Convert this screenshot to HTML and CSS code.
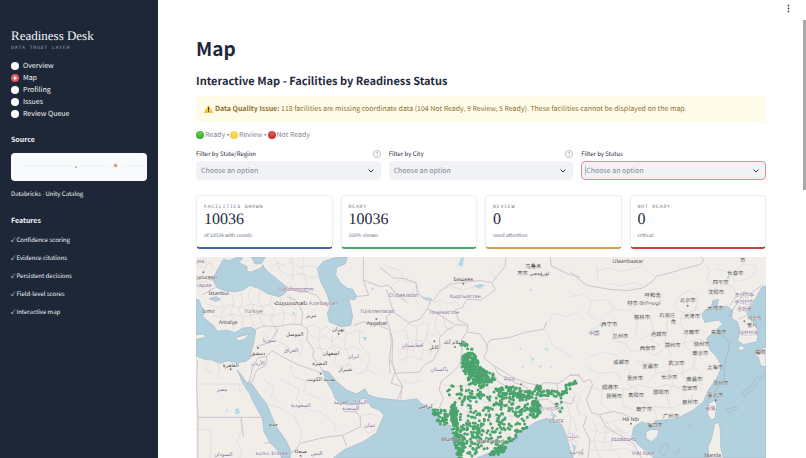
FILE: index.html
```html
<!DOCTYPE html>
<html lang="en">
<head>
<meta charset="utf-8">
<title>Readiness Desk - Map</title>
<link rel="stylesheet" href="styles.css">
</head>
<body>
<div class="app">
<aside class="sidebar">
  <div class="brand">Readiness Desk</div>
  <div class="eyebrow tagline">DATA TRUST LAYER</div>
  <nav class="nav">
    <label><input type="radio" name="page">Overview</label>
    <label><input type="radio" name="page" checked>Map</label>
    <label><input type="radio" name="page">Profiling</label>
    <label><input type="radio" name="page">Issues</label>
    <label><input type="radio" name="page">Review Queue</label>
  </nav>
  <h3>Source</h3>
  <div class="source"><svg viewBox="0 0 136 28" aria-hidden="true"><path d="M9 13H62M69 13H98M111 13H136" stroke="#f1f3f5" stroke-width="2" stroke-dasharray="2 1"/><circle cx="65" cy="14" r=".7" fill="#555"/><circle cx="104.500" cy="12.500" r="2.500" fill="#f8e3d3"/><circle cx="104.500" cy="12.500" r="1.200" fill="#c67a4b"/></svg></div>
  <p class="caption">Databricks <span class="sep">·</span> Unity Catalog</p>
  <h3>Features</h3>
  <ul class="features">
    <li>✓ Confidence scoring</li>
    <li>✓ Evidence citations</li>
    <li>✓ Persistent decisions</li>
    <li>✓ Field-level scores</li>
    <li>✓ Interactive map</li>
  </ul>
</aside>
<main class="main">
  <button class="menu" aria-label="Menu"><svg viewBox="0 0 9 9"><circle cx="4.500" cy="1.500" r=".9"/><circle cx="4.500" cy="4.500" r=".9"/><circle cx="4.500" cy="7.500" r=".9"/></svg></button>
  <div class="scroll-thumb"></div>
  <h1>Map</h1>
  <h2>Interactive Map - Facilities by Readiness Status</h2>
  <div class="alert">
    <svg viewBox="0 0 18 16" aria-hidden="true"><path d="M9 1.500 17 15H1Z" fill="#fcc52c" stroke="#f3b41f" stroke-width="1.500" stroke-linejoin="round"/><path d="M9 5v5" stroke="#333" stroke-width="2" stroke-linecap="round"/><circle cx="9" cy="13" r="1.200" fill="#333"/></svg>
    <p><b>Data Quality Issue:</b> 118 facilities are missing coordinate data (104 Not Ready, 9 Review, 5 Ready). These facilities cannot be displayed on the map.</p>
  </div>
  <div class="legend"><i class="dot green"></i><span>Ready <span class="sep">•</span></span><i class="dot yellow"></i><span>Review <span class="sep">•</span></span><i class="dot red"></i><span>Not Ready</span></div>
  <div class="filters">
    <div class="field">
      <div class="field-head"><label for="state">Filter by State/Region</label><svg class="help" viewBox="0 0 16 16"><circle cx="8" cy="8" r="7"/><path d="M5.800 6.500c0-3 4.600-2.700 4.400 0 0 1.500-2.200 1.400-2.200 3.300M8 11v1.500"/></svg></div>
      <div class="pick"><select id="state"><option>Choose an option</option></select><svg viewBox="0 0 8 8"><path d="M1.500 2.500 4 5l2.500-2.500"/></svg></div>
    </div>
    <div class="field">
      <div class="field-head"><label for="city">Filter by City</label><svg class="help" viewBox="0 0 16 16"><circle cx="8" cy="8" r="7"/><path d="M5.800 6.500c0-3 4.600-2.700 4.400 0 0 1.500-2.200 1.400-2.200 3.300M8 11v1.500"/></svg></div>
      <div class="pick"><select id="city"><option>Choose an option</option></select><svg viewBox="0 0 8 8"><path d="M1.500 2.500 4 5l2.500-2.500"/></svg></div>
    </div>
    <div class="field">
      <div class="field-head"><label for="status">Filter by Status</label></div>
      <div class="pick active"><select id="status"><option>Choose an option</option></select><svg viewBox="0 0 8 8"><path d="M1.500 2.500 4 5l2.500-2.500"/></svg></div>
    </div>
  </div>
  <div class="cards">
    <div class="card blue"><div class="eyebrow">FACILITIES SHOWN</div><div class="value">10036</div><div class="note">of 10036 with coords</div></div>
    <div class="card ok"><div class="eyebrow">READY</div><div class="value">10036</div><div class="note">100% shown</div></div>
    <div class="card warn"><div class="eyebrow">REVIEW</div><div class="value">0</div><div class="note">need attention</div></div>
    <div class="card bad"><div class="eyebrow">NOT READY</div><div class="value">0</div><div class="note">critical</div></div>
  </div>
  <svg class="map" viewBox="18 21 1710 603" role="img" aria-label="Facility map">
    <rect x="18" y="21" width="1710" height="603" fill="#f1eeea"/>
    <!-- seas -->
    <g class="sea">
      <path d="M100 28 118 32 140 22 158 24 147 38 172 50 170 64 184 66 208 56 222 48 216 44 232 64 262 88 290 112 283 132 268 140 235 132 212 118 180 106 160 120 135 125 105 122 80 112 70 90 78 68Z"/>
      <path d="M184 21H226L214 40 196 42Z"/>
      <path d="M382 55 400 35 440 21H472L465 42 440 52 437 75 452 100 472 115 488 118 500 140 492 150 476 146 482 170 488 200 482 226 452 230 418 216 412 190 422 165 410 130 392 95Z"/>
      <path d="M58 146 78 140 92 148 76 154Z"/>
      <path d="M18 148 28 150 34 170 44 182 38 200 56 215 72 228 82 244 110 240 135 248 158 234 185 232 197 240 192 275 184 305 180 325 168 334 140 338 112 332 90 340 66 330 45 328 18 318V268L48 262 40 252 18 254Z"/>
      <path d="M142 360 156 378 172 402 174 395 184 400 205 430 230 462 248 506 262 535 290 575 303 605 300 624H275L262 600 240 578 222 545 217 505 195 465 178 430 160 402Z"/>
      <path d="M398 362 415 365 440 395 470 420 500 432 525 416 534 434 565 444 600 448 640 452 680 446 696 462 728 474 740 500 758 525 782 526 792 560 804 624H430L465 598 520 575 558 550 582 495 568 480 545 472 528 446 512 446 508 462 480 465 450 460 435 445 426 420 410 395Z"/>
      <path d="M860 624 920 600 970 565 1012 532 1040 515 1070 505 1100 512 1116 525 1130 560 1140 600 1150 624Z"/>
      <path d="M1535 195 1545 180 1565 170 1568 152 1585 148 1580 175 1610 168 1628 182 1625 205 1642 215 1650 240 1643 272 1660 284 1700 275 1706 245 1695 225 1673 198 1670 180 1695 150 1704 132 1716 112 1728 108V624H1392L1370 605 1340 580 1325 560 1332 530 1355 515 1378 524 1388 530 1396 512 1460 506 1510 480 1540 455 1555 420 1580 385 1596 350 1578 318 1560 300 1550 265 1572 245 1598 222 1588 210 1560 214 1545 218Z"/>
    </g>
    <g class="isle">
      <path d="M134 264 154 258 178 252 166 266 148 273Z"/>
      <path d="M368 545 385 538 407 540 402 560 384 575 368 565Z" transform="translate(1000)"/>
      <path d="M1573 450 1580 464 1575 505 1563 510 1552 490 1556 462Z"/>
      <path d="M1574 520 1586 518 1592 540 1592 590 1600 624H1556L1554 590 1565 565Z"/>
      <path d="M1700 300 1728 290V350L1712 348 1706 322 1694 316ZM1642 294 1656 286 1664 296 1652 302Z"/>
      <path d="M1728 360 1700 384 1680 412 1656 426 1662 438 1690 416 1712 385 1728 374ZM1608 478 1640 470 1640 478 1614 489ZM1408 608 1416 584 1432 582 1437 594 1422 616ZM1448 610 1468 596 1470 604 1454 615Z" fill="none"/>
      <circle cx="1500" cy="527" r="6" fill="none"/>
    </g>
    <g class="lake"><path d="M20 186 32 195 24 202ZM28 210 45 218 36 225ZM20 232 44 238 30 245ZM306 184 316 188 310 196ZM518 260 532 262 524 274ZM540 120 550 112 552 118ZM134 478 145 474 150 488 138 494ZM108 478 114 480 110 488ZM804 45 812 25 822 21 818 50ZM850 108 870 102 888 106 866 116ZM690 140 724 144 726 150 700 148ZM1016 120 1024 118 1028 124ZM1226 224 1240 222 1238 234ZM1020 322 1034 326 1028 334ZM1060 296 1070 294 1078 304ZM1046 348 1056 346 1052 354ZM992 350 1004 348 998 354ZM986 296 996 292 992 300ZM1076 350 1088 346 1082 353ZM1080 492 1098 494 1092 508ZM1144 578 1160 590 1152 606ZM1610 80 1620 76 1614 90Z"/></g>
    <!-- provinces -->
    <g class="prov"><path d="M18 45 42 52 60 38 74 60M44 21 50 44 34 80 64 92M18 98 50 94 62 120M240 52 262 40 282 46 302 34 330 52 364 48 390 62M256 21 268 60 298 78 330 70 360 82 388 80M302 21 310 58 306 92M340 21 338 60 352 108M92 150 104 176 92 200 108 232M124 128 132 158 122 190 136 214 130 242M150 126 158 154 146 182 160 206 156 234M182 112 174 142 190 170 180 198 194 230M212 120 204 150 222 176 210 204 222 234M246 136 238 160 254 184 242 212 256 232M276 142 268 166 284 190 276 226M300 132 304 164 320 184 312 222M52 162 84 174 120 164 150 174 182 162 218 170 250 158 290 168 330 158M66 196 96 202 128 192 160 200 204 190 244 198 280 188 320 198M350 232 372 224 392 240 408 230 430 246 452 240 478 252 500 240 530 250M360 254 384 270 402 256 424 276 446 260 468 280M376 292 410 300 432 286 460 300 492 290 514 305M390 240 384 280 398 310 388 340M428 246 424 280 440 312 430 346M468 250 464 292 480 326 470 352M510 240 508 280 540 320 530 360M446 350 480 342 500 372 538 360 566 380M214 244 234 262 220 288M264 236 254 270 292 288 280 316M292 250 324 260 340 292 328 320M50 336 48 358 70 374M82 340 90 362 78 384M100 338 108 364M146 400 152 430M18 402H172M150 502 156 540 140 575 156 600 150 624M18 538H62V624M218 388 252 410 244 440 276 462M268 386 296 400 330 420 318 446 350 478 394 488M230 460 274 476 312 498 336 548 328 580M352 430 400 452M394 488 430 516 440 548M300 346 312 380 352 396 340 424M510 500 540 490 566 500M512 530 534 550 556 540"/>
      <path transform="translate(570)" d="M20 50 62 62 70 92 110 100 120 140 150 158M60 90 32 110 48 140 86 150M110 96 98 128 118 170M160 158 184 150 200 162 228 154 240 168M178 122 212 108 250 120 282 110 310 118M40 250 72 240 82 222 110 230 130 218 152 226M50 300 88 296 100 268 132 276 142 250 170 258M60 330 94 318 124 330 130 300 160 306M78 240 86 280 76 338M108 232 112 270 98 308M146 230 140 264 158 290 148 320M170 200 164 238 184 258M190 196 196 232 220 240M66 390 92 402 120 390M170 450 158 470M180 400 222 412 262 404 294 418 342 412M204 440 240 452 284 440 322 458 370 446 430 462M236 474 268 490 310 482 352 504 396 498 442 512M230 524 274 530 310 548 350 538 388 556M236 570 284 576 320 566 358 592M262 404 252 444 264 480 254 520 262 590M322 400 330 444 322 490 334 536 322 600M392 420 384 466 396 510M440 440 448 470 438 520M508 216 518 190 560 200 600 184M330 60 350 92M500 216 494 236 522 290 576 320M560 460 574 510 566 540 590 580M570 440 588 460 600 500"/>
      <path transform="translate(1140)" d="M80 50 84 92M86 60 120 54 150 64 208 52 226 21M120 100 152 108 190 98 220 106M0 140 40 132 66 152 110 148 134 178 180 184 200 160M190 184 202 222 196 250 216 268 240 250M134 178 100 200 86 230 60 238M66 152 54 190 80 212M110 222 132 240 128 270 166 280 186 262M166 280 180 304 224 300 250 316 280 300M240 196 250 236 244 270 270 286M290 190 292 240 284 282 308 316M338 190 330 222 350 250 340 280 362 304M316 150 340 130 362 120 384 140 376 180 350 190 318 180ZM376 170 396 192M350 250 388 238 412 248M340 280 386 268 410 276M60 320 100 306 140 316 166 300M48 350 84 370 130 366 156 384M156 330 180 360 170 400 200 420M200 334 250 340 258 370 230 398M258 370 300 362 330 372M302 330 296 360 310 402 290 440 302 474M340 330 336 370 354 402 340 440M376 310 372 350 400 380 392 420M330 372 372 350M48 410 96 420 132 410 170 420 202 404 246 414 290 404 354 420 390 400M98 420 92 460 130 490M160 420 158 466 190 480M200 420 212 456 250 470 262 508M250 470 302 474 342 460M370 430 360 462M400 40 420 58 410 90 440 104 430 130M440 58 480 66 494 96 540 84 560 60M450 102 486 108 500 130M500 60 520 42 560 48M510 152 548 150M516 180 534 184M520 220 550 230M66 510 82 540 70 570 90 624M84 516 110 544 100 580 124 610M110 514 130 550 122 590 150 624M130 520 152 544 176 550M60 540 104 550 140 540 174 560M54 570 100 578 148 570 188 586M60 600 110 602 160 594 204 608M76 494 110 520 150 508M0 420 30 440 20 480 50 500M10 500 20 540 4 580"/></g>
    <!-- countries -->
    <g class="border"><path d="M18 42 34 34 44 40M18 90 40 84 70 90M36 134 54 126 76 112M196 238 220 228 262 230 300 222 334 224 338 190 330 170 316 150 290 140M290 112 320 124 352 126 380 136 398 160 420 170M334 224 354 240 350 268 372 300 368 320 388 346 398 364M198 290 240 276 262 240 254 232M246 302 232 318 204 324 188 350 178 398M246 302 280 322 324 344 370 360 396 370M230 318 228 346 200 360 186 396M22 330 20 402 24 502H222M24 502V624M154 502 160 560M520 21V90L572 110 594 105 620 130 652 160M520 90 536 136 492 140M490 226 520 216 556 222 600 240 604 280 598 330 600 370M498 486 510 500 512 530 458 556 470 590M458 556 404 562 330 580 316 600 300 610M462 484 498 486 508 462M222 580 242 576 262 602M600 330 616 360 604 400 636 410 632 448"/>
      <path transform="translate(570)" d="M0 52 40 84 74 86 108 98 112 130 142 150 160 152 178 126 206 104 238 98 300 92 336 98 350 80 376 48 378 21M336 98 346 120 304 150 260 148 248 172 224 180 236 210 264 224 260 246 300 252 324 290 312 324 340 346 376 368 406 386 444 400 480 406 494 398 536 400 570 376 600 374M20 120 32 160 40 186 86 218 120 208 142 176 180 196 224 224 260 226M142 176 154 150M40 186 18 200 30 240 38 270 36 340 46 370 118 366 134 344 160 330 180 290 178 264 200 240 224 228M46 370 68 410 52 450M260 246 244 270 246 300 240 344 216 368 182 396 178 420 190 446 178 474M340 346 356 372 392 392 440 412 444 422 400 420 356 396 340 370M480 406 486 420 534 422 530 400M446 440 472 450 506 448 524 466 514 486 530 500M536 470 550 456 574 462 586 436M510 21 514 48 560 70 600 82M316 292 330 270 390 262 440 246 490 238 500 216"/>
      <path transform="translate(1140)" d="M0 64 30 90 50 106 118 118 170 122 218 114 246 96 260 78 296 70 340 56 390 44 402 30 390 21M0 374 30 378 40 396 60 388 68 404 50 450 64 488 90 494 130 484 160 492 180 502M580 104 564 114 542 130 520 126 496 142 480 166M506 208 530 196M50 500 40 530 60 570 54 624M90 496 106 530 150 556 190 580 214 624M500 284 484 262 474 220"/></g>
    <g class="maritime"><path d="M1665 124 1640 162 1615 200M1595 250 1620 280 1605 340 1602 390 1570 430 1544 462"/></g>
    <g id="facilities"></g>
    <!-- place names -->
    <g class="names country">
      <text class="edge" x="20" y="38">nia</text><text class="edge" x="20" y="110">гария</text><text x="190" y="189">Türkiye</text><text x="318" y="122">საქართველო</text><text x="400" y="166">Azərbaycan</text><text x="562" y="190">Türkmenistan</text><text x="640" y="140">O'zbekiston</text><text x="826" y="144">Кыргызстан</text><text x="762" y="193">Тоҷикистон</text><text x="238" y="276">سوريا</text><text x="303" y="307">العراق</text><text x="204" y="344">الأردن</text><text x="96" y="424">مصر</text><text x="332" y="472">السعودية</text><text x="482" y="461">الإمارات العربية</text><text x="482" y="480">المتحدة</text><text x="540" y="532">عمان</text><text x="380" y="616">اليمن</text><text x="245" y="616">ኤርትራ Eritrea</text><text x="100" y="618">السودان</text><text x="490" y="324">ایران</text><text x="668" y="292">افغانستان</text><text x="748" y="362">پاکستان</text><text x="958" y="392">नेपाल</text><text x="1212" y="256">中国</text><text x="1663" y="142">조선민주</text><text x="1663" y="162">주의인민</text><text x="1663" y="184">공화국</text><text x="1676" y="256">대한민국</text><text x="1560" y="480">臺灣</text><text x="1360" y="616">Việt Nam</text><text x="1302" y="574">ປະເທດລາວ</text><text x="1150" y="563">မြန်မာ</text><text x="1080" y="482">বাংলাদেশ</text>
    </g>
    <g class="names">
      <text class="edge" x="20" y="87">ucurești</text><text x="86" y="136">İstanbul</text><text x="56" y="190">İzmir</text><text x="114" y="221">Antalya</text><text x="302" y="166">Հայաստան</text><text x="364" y="200">تبریز</text><text x="445" y="244">تهران</text><text x="314" y="259">الموصل</text><text x="204" y="315">دمشق</text><text x="423" y="314">اصفهان</text><text x="389" y="345">البصرة</text><text x="466" y="362">شیراز</text><text x="392" y="392">مدينة الكويت</text><text x="122" y="351">القاهرة</text><text x="250" y="528">جدة</text><text x="332" y="608">صنعاء</text><text x="560" y="226">Aşgabat</text><text x="820" y="93">Бишкек</text><text x="1030" y="54">乌鲁木</text><text x="1030" y="76">齐市 ئۈرۈمچى</text><text x="732" y="298">کابل</text><text x="792" y="283">اسلام آباد</text><text x="706" y="474">کراچی</text><text x="784" y="572">Mumbai</text><text x="900" y="578">Hyderabad</text><text x="1098" y="519">চট্টগ্রাম</text><text x="1160" y="612">ရန်ကုန်</text><text x="1314" y="39">Ulaanbaatar</text>
      <text x="1658" y="36">市</text><text x="1636" y="74">长春市</text><text x="1592" y="102">四平市</text><text x="1578" y="133">沈阳市</text><text x="1576" y="180">大连市</text><text x="1388" y="141">呼和浩</text><text x="1362" y="165">特市 ᠬᠥᠬᠡᠬᠣᠲᠠ</text><text x="1493" y="157">北京市</text><text x="1356" y="206">榆林市</text><text x="1432" y="202">石家庄</text><text x="1450" y="221">市</text><text x="1506" y="203">天津市</text><text x="1258" y="227">西宁市</text><text x="1291" y="265">兰州市</text><text x="1406" y="259">运城市</text><text x="1504" y="253">济南市</text><text x="1586" y="251">青岛市</text><text x="1373" y="300">西安市</text><text x="1448" y="290">郑州市</text><text x="1535" y="287">徐州市</text><text x="1531" y="316">南京市</text><text x="1294" y="343">成都市</text><text x="1381" y="355">宜昌市</text><text x="1459" y="344">武汉市</text><text x="1575" y="358">上海市</text><text x="1335" y="389">重庆市</text><text x="1438" y="388">长沙市</text><text x="1513" y="392">南昌市</text><text x="1592" y="404">温州市</text><text x="1260" y="416">昭通市</text><text x="1272" y="444">昆明市</text><text x="1338" y="442">贵阳市</text><text x="1413" y="431">邵阳市</text><text x="1499" y="421">吉安市</text><text x="1576" y="442">臺北市</text><text x="1500" y="461">泉州市</text><text x="1362" y="484">南宁市</text><text x="1443" y="504">广州市</text><text x="1394" y="532">海口市</text><text x="1322" y="512">Hà Nội</text><text x="1568" y="620">Manila</text><text x="1694" y="211">서울특</text><text x="1686" y="231">별시</text><text x="1710" y="312">福岡</text>
    </g>
    <path class="towns" d="M40 67h0M122 358h0M204 294h0M336 160h0M446 252h0M392 371h0M332 617h0M559 207h0M820 101h0M733 274h0M795 291h0M993 403h0M1493 167h0M1577 451h0M1323 521h0M1663 214h0M1450 211h0"/>
  </svg>
</main>
</div>
<script src="map.js"></script>
</body>
</html>
```
FILE: styles.css
```css
* { box-sizing: border-box; }
body { margin: 0; background: #fff; color: #1f293b; font: 7px/12px "Noto Sans CJK SC", "Noto Sans", sans-serif; text-rendering: geometricPrecision; }
h1, h2, h3, p, ul { margin: 0; padding: 0; }
.app { display: flex; height: 100vh; overflow: hidden; }
.sidebar { flex: 0 0 158px; background: #1e2738; color: #f1f3f6; padding: 28px 11px 0; font-size: 6px; }
.brand { font: 13px/16px "Liberation Serif", serif; white-space: nowrap; }
.eyebrow { font: 5px/6px "Liberation Mono", monospace; letter-spacing: .14em; color: #6c7483; white-space: nowrap; }
.tagline { line-height: 8px; color: #98a0ac; }
.nav { margin-top: 8px; display: flex; flex-direction: column; font-size: 7px; }
.nav label { display: flex; align-items: center; gap: 4px; height: 12px; }
.nav input { appearance: none; margin: 0; width: 8px; height: 8px; border-radius: 50%; background: #fff; }
.nav input:checked { background: radial-gradient(circle, #fff 0 1px, #e5575b 2px); }
h3 { margin-top: 14px; font-size: 7px; line-height: 12px; font-weight: 700; }
.source { margin: 7px 0; height: 28px; border-radius: 4px; background: #f9fafb; overflow: hidden; }
.source svg { display: block; width: 100%; height: 100%; }
.sep { font-family: "Liberation Sans", sans-serif; }
.features { list-style: none; margin-top: 4px; line-height: 18px; }

.main { position: relative; flex: 1; min-width: 0; padding: 37px 40px 0 38px; overflow: hidden; }
.menu { position: absolute; top: 4px; right: 13px; width: 9px; height: 9px; padding: 0; border: 0; background: none; display: flex; }
.menu svg { width: 100%; fill: #4b5160; }
.scroll-thumb { position: absolute; top: 20px; right: 0; width: 3px; height: 170px; background: #a8a8aa; }
h1 { font-size: 19px; line-height: 24px; }
h2 { margin-top: 12px; font-size: 11px; line-height: 16px; }
.alert { margin-top: 7px; min-height: 26px; padding: 0 8px; display: flex; align-items: center; gap: 2px; border-radius: 4px; background: #fffbe9; color: #91712c; }
.alert svg { width: 9px; height: 8px; flex: none; }
.legend { margin-top: 7px; display: flex; align-items: center; gap: 1px; height: 12px; color: #858994; }
.dot { width: 8px; height: 8px; border-radius: 50%; }
.green { background: radial-gradient(circle at 50% 25%, #65d04e, #2c9e24); }
.yellow { background: radial-gradient(circle at 50% 25%, #ffe36b, #f3bf30); }
.red { background: radial-gradient(circle at 50% 25%, #e65a50, #b8201d); }
.filters { margin-top: 7px; display: grid; grid-template-columns: repeat(3, 1fr); gap: 8px; }
.field-head { display: flex; justify-content: space-between; align-items: center; height: 12px; margin-bottom: 1px; font-size: 6px; }
.help { width: 8px; height: 8px; fill: none; stroke: #7c808b; stroke-width: 1; }
.pick { position: relative; }
.pick select { appearance: none; display: block; width: 100%; height: 19px; margin: 0; padding: 0 4px; border: 1px solid #f0f2f6; border-radius: 4px; background: #f0f2f6; color: #858994; font: inherit; text-rendering: inherit; }
.pick svg { position: absolute; right: 6px; top: 6px; width: 8px; height: 8px; fill: none; stroke: #333a48; stroke-width: 1; pointer-events: none; }
.pick.active select { border-color: #f08a8e; }
.active::before { content: ""; position: absolute; left: 4px; top: 5px; width: 1px; height: 9px; background: #b4b7be; }
.cards { margin-top: 15px; display: grid; grid-template-columns: repeat(4, 1fr); gap: 8px; }
.card { min-height: 54px; padding: 8px 7px 7px; border: 1px solid #edeff2; border-bottom: 2px solid; border-radius: 4px; box-shadow: 0 1px 3px #1e27380d; }
.card.blue { border-bottom-color: #4264a8; }
.card.ok { border-bottom-color: #4ba36c; }
.card.warn { border-bottom-color: #d1a048; }
.card.bad { border-bottom-color: #c14542; }
.value { font: 16px/20px "Liberation Serif", serif; }
.note { margin-top: 2px; font-size: 5px; line-height: 8px; color: #646c7b; }
.map { display: block; width: 100%; margin-top: 8px; }
.sea path { fill: #b0d1dd; stroke: #a3b6cb; stroke-width: 2; stroke-linejoin: round; }
.lake { fill: #b0d9e6; }
.isle { fill: #f1eeea; stroke: #a9b3ca; stroke-width: 2; }
.prov { fill: none; stroke: #ddd4dc; stroke-width: 2; stroke-linejoin: round; }
.border { fill: none; stroke: #d0c3d0; stroke-width: 3; stroke-linejoin: round; }
.maritime { fill: none; stroke: #9eb1cc; stroke-width: 2; }
.names { fill: #4e4e50; font-family: "Noto Sans", "Noto Sans CJK SC", "DejaVu Sans", sans-serif; font-size: 16px; text-anchor: middle; paint-order: stroke; stroke: #f5f3f0; stroke-width: 1; }
.edge { text-anchor: start; }
.country { fill: #8c709b; }
.towns { stroke: #77777a; stroke-width: 6; stroke-linecap: round; }
#facilities { fill: #4ba46e; }
```
FILE: map.js
```js
// Facility clusters: centre x, centre y, radius x, radius y, tilt in degrees, count
const clusters = [
  [820, 282, 12, 6, 20, 12], [838, 300, 10, 6, 0, 3],
  [838, 340, 26, 32, 0, 130], [862, 380, 42, 28, 40, 150],
  [886, 385, 30, 22, 0, 30], [970, 430, 60, 20, 8, 90],
  [1035, 480, 18, 28, 0, 60], [1030, 455, 30, 40, 0, 24],
  [1045, 415, 8, 10, 0, 14], [1088, 430, 46, 9, 0, 36],
  [1134, 412, 30, 10, -35, 18], [1110, 462, 14, 26, 0, 8],
  [752, 490, 26, 12, 10, 26], [756, 515, 20, 12, 0, 18],
  [790, 490, 10, 28, 0, 60], [796, 545, 8, 40, 0, 60],
  [810, 590, 12, 40, 0, 60], [840, 570, 36, 50, 0, 60],
  [890, 490, 110, 60, 0, 130], [830, 430, 60, 36, 0, 34],
  [890, 580, 50, 40, 0, 40], [925, 602, 28, 12, -30, 44],
  [970, 560, 55, 7, -38, 24], [950, 500, 70, 50, 0, 46]
];
let seed = 7;
const random = () => (seed = (seed * 16807) % 2147483647) / 2147483647;
const dots = [];
for (const [cx, cy, rx, ry, tilt, count] of clusters) {
  const t = tilt * Math.PI / 180;
  for (let i = 0; i < count; i++) {
    const a = random() * Math.PI * 2;
    const r = Math.sqrt(random());
    const dx = Math.cos(a) * r * rx;
    const dy = Math.sin(a) * r * ry;
    const x = cx + dx * Math.cos(t) - dy * Math.sin(t);
    const y = cy + dx * Math.sin(t) + dy * Math.cos(t);
    dots.push(`<circle cx="${x.toFixed(0)}" cy="${y.toFixed(0)}" r="4.500"/>`);
  }
}
document.getElementById("facilities").innerHTML = dots.join("");
```
